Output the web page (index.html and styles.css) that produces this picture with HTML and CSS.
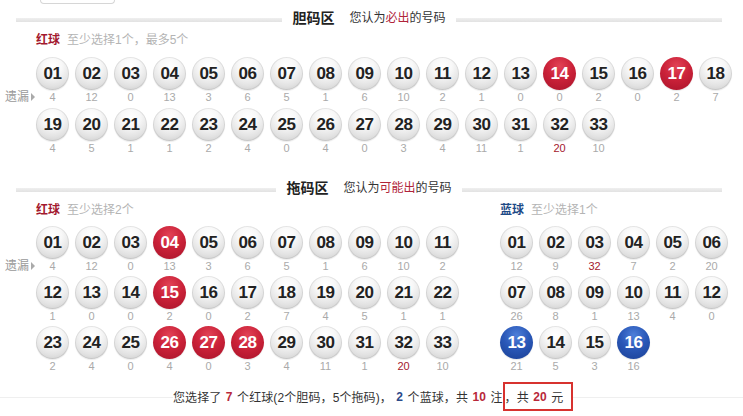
FILE: index.html
```html
<!DOCTYPE html>
<html lang="zh">
<head>
<meta charset="utf-8">
<title>胆拖选号</title>
<link rel="stylesheet" href="styles.css">
</head>
<body>
<div class="topbox"></div>

<div class="zone-head z1">
  <div class="zline"></div>
  <div class="ztitle"><b>胆码区</b><span class="zsub">您认为<em>必出</em>的号码</span></div>
  <div class="zline"></div>
</div>

<div class="sec1">
  <div class="label"><span class="lred">红球</span><span class="ltip">至少选择1个，最多5个</span></div>
  <div class="rows r1">
    <div class="row">
      <div class="side"><span class="miss-lbl">遗漏</span><i class="tri"></i></div>
      <div class="balls">
        <div class="it"><div class="ball">01</div><div class="miss">4</div></div>
        <div class="it"><div class="ball">02</div><div class="miss">12</div></div>
        <div class="it"><div class="ball">03</div><div class="miss">0</div></div>
        <div class="it"><div class="ball">04</div><div class="miss">13</div></div>
        <div class="it"><div class="ball">05</div><div class="miss">3</div></div>
        <div class="it"><div class="ball">06</div><div class="miss">6</div></div>
        <div class="it"><div class="ball">07</div><div class="miss">5</div></div>
        <div class="it"><div class="ball">08</div><div class="miss">1</div></div>
        <div class="it"><div class="ball">09</div><div class="miss">6</div></div>
        <div class="it"><div class="ball">10</div><div class="miss">10</div></div>
        <div class="it"><div class="ball">11</div><div class="miss">2</div></div>
        <div class="it"><div class="ball">12</div><div class="miss">1</div></div>
        <div class="it"><div class="ball">13</div><div class="miss">0</div></div>
        <div class="it"><div class="ball red">14</div><div class="miss">0</div></div>
        <div class="it"><div class="ball">15</div><div class="miss">2</div></div>
        <div class="it"><div class="ball">16</div><div class="miss">0</div></div>
        <div class="it"><div class="ball red">17</div><div class="miss">2</div></div>
        <div class="it"><div class="ball">18</div><div class="miss">7</div></div>
      </div>
    </div>
    <div class="row">
      <div class="side"></div>
      <div class="balls">
        <div class="it"><div class="ball">19</div><div class="miss">4</div></div>
        <div class="it"><div class="ball">20</div><div class="miss">5</div></div>
        <div class="it"><div class="ball">21</div><div class="miss">1</div></div>
        <div class="it"><div class="ball">22</div><div class="miss">1</div></div>
        <div class="it"><div class="ball">23</div><div class="miss">2</div></div>
        <div class="it"><div class="ball">24</div><div class="miss">4</div></div>
        <div class="it"><div class="ball">25</div><div class="miss">0</div></div>
        <div class="it"><div class="ball">26</div><div class="miss">4</div></div>
        <div class="it"><div class="ball">27</div><div class="miss">0</div></div>
        <div class="it"><div class="ball">28</div><div class="miss">3</div></div>
        <div class="it"><div class="ball">29</div><div class="miss">4</div></div>
        <div class="it"><div class="ball">30</div><div class="miss">11</div></div>
        <div class="it"><div class="ball">31</div><div class="miss">1</div></div>
        <div class="it"><div class="ball">32</div><div class="miss hot">20</div></div>
        <div class="it"><div class="ball">33</div><div class="miss">10</div></div>
      </div>
    </div>
  </div>
</div>

<div class="zone-head z2">
  <div class="zline"></div>
  <div class="ztitle"><b>拖码区</b><span class="zsub">您认为<em>可能出</em>的号码</span></div>
  <div class="zline"></div>
</div>

<div class="sec2">
  <div class="colL">
    <div class="label"><span class="lred">红球</span><span class="ltip">至少选择2个</span></div>
    <div class="rows r2">
      <div class="row">
        <div class="side"><span class="miss-lbl">遗漏</span><i class="tri"></i></div>
        <div class="balls">
          <div class="it"><div class="ball">01</div><div class="miss">4</div></div>
          <div class="it"><div class="ball">02</div><div class="miss">12</div></div>
          <div class="it"><div class="ball">03</div><div class="miss">0</div></div>
          <div class="it"><div class="ball red">04</div><div class="miss">13</div></div>
          <div class="it"><div class="ball">05</div><div class="miss">3</div></div>
          <div class="it"><div class="ball">06</div><div class="miss">6</div></div>
          <div class="it"><div class="ball">07</div><div class="miss">5</div></div>
          <div class="it"><div class="ball">08</div><div class="miss">1</div></div>
          <div class="it"><div class="ball">09</div><div class="miss">6</div></div>
          <div class="it"><div class="ball">10</div><div class="miss">10</div></div>
          <div class="it"><div class="ball">11</div><div class="miss">2</div></div>
        </div>
      </div>
      <div class="row">
        <div class="side"></div>
        <div class="balls">
          <div class="it"><div class="ball">12</div><div class="miss">1</div></div>
          <div class="it"><div class="ball">13</div><div class="miss">0</div></div>
          <div class="it"><div class="ball">14</div><div class="miss">0</div></div>
          <div class="it"><div class="ball red">15</div><div class="miss">2</div></div>
          <div class="it"><div class="ball">16</div><div class="miss">0</div></div>
          <div class="it"><div class="ball">17</div><div class="miss">2</div></div>
          <div class="it"><div class="ball">18</div><div class="miss">7</div></div>
          <div class="it"><div class="ball">19</div><div class="miss">4</div></div>
          <div class="it"><div class="ball">20</div><div class="miss">5</div></div>
          <div class="it"><div class="ball">21</div><div class="miss">1</div></div>
          <div class="it"><div class="ball">22</div><div class="miss">1</div></div>
        </div>
      </div>
      <div class="row">
        <div class="side"></div>
        <div class="balls">
          <div class="it"><div class="ball">23</div><div class="miss">2</div></div>
          <div class="it"><div class="ball">24</div><div class="miss">4</div></div>
          <div class="it"><div class="ball">25</div><div class="miss">0</div></div>
          <div class="it"><div class="ball red">26</div><div class="miss">4</div></div>
          <div class="it"><div class="ball red">27</div><div class="miss">0</div></div>
          <div class="it"><div class="ball red">28</div><div class="miss">3</div></div>
          <div class="it"><div class="ball">29</div><div class="miss">4</div></div>
          <div class="it"><div class="ball">30</div><div class="miss">11</div></div>
          <div class="it"><div class="ball">31</div><div class="miss">1</div></div>
          <div class="it"><div class="ball">32</div><div class="miss hot">20</div></div>
          <div class="it"><div class="ball">33</div><div class="miss">10</div></div>
        </div>
      </div>
    </div>
  </div>

  <div class="colR">
    <div class="label"><span class="lblue">蓝球</span><span class="ltip">至少选择1个</span></div>
    <div class="rows r2">
      <div class="balls">
        <div class="it"><div class="ball">01</div><div class="miss">12</div></div>
        <div class="it"><div class="ball">02</div><div class="miss">9</div></div>
        <div class="it"><div class="ball">03</div><div class="miss hot">32</div></div>
        <div class="it"><div class="ball">04</div><div class="miss">7</div></div>
        <div class="it"><div class="ball">05</div><div class="miss">2</div></div>
        <div class="it"><div class="ball">06</div><div class="miss">20</div></div>
      </div>
      <div class="balls">
        <div class="it"><div class="ball">07</div><div class="miss">26</div></div>
        <div class="it"><div class="ball">08</div><div class="miss">8</div></div>
        <div class="it"><div class="ball">09</div><div class="miss">1</div></div>
        <div class="it"><div class="ball">10</div><div class="miss">13</div></div>
        <div class="it"><div class="ball">11</div><div class="miss">4</div></div>
        <div class="it"><div class="ball">12</div><div class="miss">0</div></div>
      </div>
      <div class="balls">
        <div class="it"><div class="ball blue">13</div><div class="miss">21</div></div>
        <div class="it"><div class="ball">14</div><div class="miss">5</div></div>
        <div class="it"><div class="ball">15</div><div class="miss">3</div></div>
        <div class="it"><div class="ball blue">16</div><div class="miss">16</div></div>
      </div>
    </div>
  </div>
</div>

<div class="summary">
  <div class="sum-text">您选择了 <b class="nr">7</b> 个红球(2个胆码，5个拖码)， <b class="nb">2</b> 个蓝球，共 <b class="nr">10</b> 注<span class="total">，共 <b class="nr">20</b> 元</span></div>
</div>
</body>
</html>
```

FILE: styles.css
```css
* { box-sizing: border-box; }
html, body { margin: 0; padding: 0; background: #fff; }
body {
  width: 743px;
  height: 416px;
  overflow: hidden;
  font-family: "Liberation Sans", "Noto Sans CJK SC", sans-serif;
  font-size: 12px;
  color: #333;
}
b { font-weight: bold; }
em { font-style: normal; color: #b0243a; }

.topbox {
  margin-left: 40px;
  width: 75px;
  height: 4px;
  border: 1px solid #d6d6d6;
  border-top: none;
  border-radius: 0 0 4px 4px;
}

.zone-head {
  display: flex;
  align-items: flex-start;
  margin-left: 16px;
  width: 706px;
  height: 18px;
}
.z1 { margin-top: 5px; }
.z2 { margin-top: 24px; }
.zline {
  flex: 1;
  height: 4px;
  margin-top: 9px;
  background: linear-gradient(#efefef, #e2e2e2);
}
.ztitle {
  display: flex;
  align-items: center;
  height: 18px;
  padding: 0 10px;
  line-height: 18px;
}
.ztitle b { font-size: 14px; color: #222; }
.zsub { margin-left: 15px; font-size: 12px; color: #333; }

.label {
  height: 14px;
  line-height: 14px;
  margin-top: 6px;
  display: flex;
  align-items: center;
}
.sec1 .label, .colL .label { padding-left: 36px; }
.lred { color: #a3192e; font-weight: bold; font-size: 12px; }
.lblue { color: #1d4a86; font-weight: bold; font-size: 12px; }
.ltip { color: #b4b4b4; margin-left: 7px; }

.rows { display: flex; flex-direction: column; }
.r1 { margin-top: 10px; gap: 4px; }
.r2 { margin-top: 9px; gap: 3px; }
.row { display: flex; }
.side {
  width: 36px;
  flex: none;
  display: flex;
  align-items: flex-end;
  padding-left: 5px;
  height: 47px;
}
.miss-lbl {
  color: #999;
  font-size: 12px;
  line-height: 14px;
}
.tri {
  width: 0; height: 0;
  margin-left: 2px;
  margin-bottom: 3px;
  border-left: 4px solid #aaa;
  border-top: 4px solid transparent;
  border-bottom: 4px solid transparent;
}

.balls { display: flex; gap: 6px; }
.it {
  width: 33px;
  display: flex;
  flex-direction: column;
  align-items: center;
}
.ball {
  width: 33px;
  height: 33px;
  border-radius: 50%;
  display: flex;
  align-items: center;
  justify-content: center;
  font-family: "Liberation Sans", Arial, sans-serif;
  font-weight: bold;
  font-size: 17px;
  letter-spacing: -0.5px;
  color: #222;
  background: radial-gradient(circle at 50% 28%, #ffffff 0%, #f8f8f8 32%, #e2e2e2 68%, #c6c6c6 100%);
  box-shadow: inset 0 0 0 1px rgba(0,0,0,0.08), 0 1px 1px rgba(0,0,0,0.08);
}
.ball.red {
  color: #fff;
  background: radial-gradient(circle at 50% 28%, #e24356 0%, #cb2239 45%, #a8132a 100%);
  box-shadow: 0 1px 1px rgba(0,0,0,0.1);
}
.ball.blue {
  color: #fff;
  background: radial-gradient(circle at 50% 28%, #4e7fd9 0%, #2a58b8 45%, #1a3f93 100%);
  box-shadow: 0 1px 1px rgba(0,0,0,0.1);
}
.miss {
  height: 14px;
  line-height: 14px;
  font-size: 11px;
  color: #aaa;
}
.miss.hot { color: #a3192e; }

.sec2 { display: flex; }
.colL { width: 500px; flex: none; }
.colR { flex: 1; }

.summary {
  margin-top: 9px;
  display: flex;
  align-items: center;
  height: 29px;
  padding-left: 173px;
  background: linear-gradient(transparent 15px, #efefef 15px, #efefef 16px, transparent 16px);
}
.sum-text {
  display: flex;
  align-items: center;
  background: #fff;
  white-space: pre;
  word-spacing: 1px;
  letter-spacing: 0.1px;
  color: #333;
  height: 29px;
}
.nr { color: #b8283a; }
.nb { color: #2b4a8a; }
.total {
  display: inline-flex;
  align-items: center;
  height: 29px;
  padding: 0 8px 0 0;
  border: 2px solid #d7322f;
  white-space: pre;
}
```
